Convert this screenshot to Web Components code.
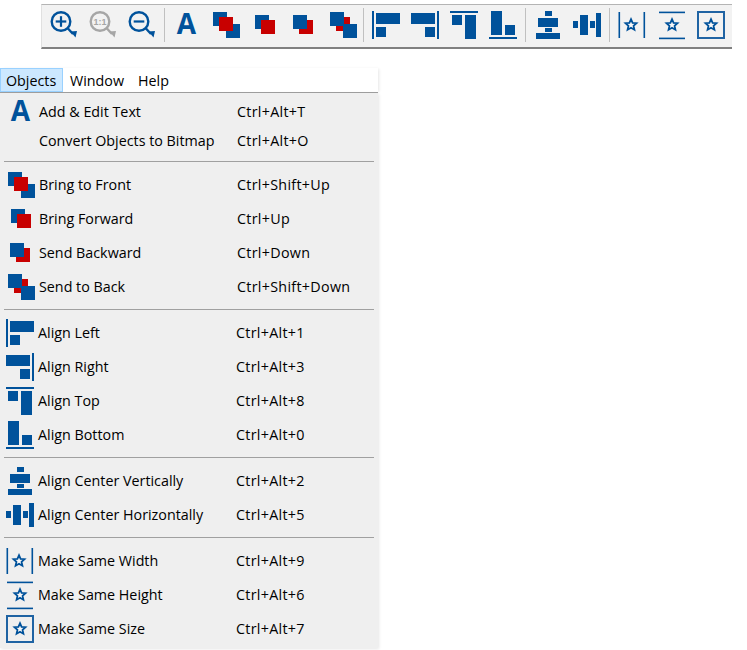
<!DOCTYPE html>
<html lang="en">
<head>
<meta charset="utf-8">
<title>Objects menu</title>
<style>
  html, body { margin: 0; padding: 0; background: #fff; }
  body { width: 747px; height: 650px; overflow: hidden; font-family: "Open Sans", "Noto Sans", sans-serif; }
</style>
</head>
<body>
<app-screen>
  <tool-bar>
    <ui-icon name="zoomIn" style="margin-left:8px"></ui-icon>
    <ui-icon name="zoomReset" style="margin-left:11px"></ui-icon>
    <ui-icon name="zoomOut" style="margin-left:11px"></ui-icon>
    <tool-sep></tool-sep>
    <ui-icon name="text" style="margin-left:1px"></ui-icon>
    <ui-icon name="front" style="margin-left:11px"></ui-icon>
    <ui-icon name="forward" style="margin-left:11px"></ui-icon>
    <ui-icon name="backward" style="margin-left:11px"></ui-icon>
    <ui-icon name="back" style="margin-left:11px"></ui-icon>
    <tool-sep style="margin-left:5px"></tool-sep>
    <ui-icon name="alignLeft"></ui-icon>
    <ui-icon name="alignRight" style="margin-left:11px"></ui-icon>
    <ui-icon name="alignTop" style="margin-left:11px"></ui-icon>
    <ui-icon name="alignBottom" style="margin-left:11px"></ui-icon>
    <tool-sep></tool-sep>
    <ui-icon name="centerV"></ui-icon>
    <ui-icon name="centerH" style="margin-left:11px"></ui-icon>
    <tool-sep></tool-sep>
    <ui-icon name="sameW"></ui-icon>
    <ui-icon name="sameH" style="margin-left:12px"></ui-icon>
    <ui-icon name="sameS" style="margin-left:11px"></ui-icon>
  </tool-bar>

  <menu-bar>
    <menu-title active>Objects</menu-title>
    <menu-title>Window</menu-title>
    <menu-title>Help</menu-title>
  </menu-bar>

  <menu-panel>
    <menu-section first>
      <menu-item icon="text" shortcut="Ctrl+Alt+T">Add &amp; Edit Text</menu-item>
      <menu-item short shortcut="Ctrl+Alt+O">Convert Objects to Bitmap</menu-item>
    </menu-section>
    <menu-section>
      <menu-item icon="front" shortcut="Ctrl+Shift+Up">Bring to Front</menu-item>
      <menu-item icon="forward" shortcut="Ctrl+Up">Bring Forward</menu-item>
      <menu-item icon="backward" shortcut="Ctrl+Down">Send Backward</menu-item>
      <menu-item icon="back" shortcut="Ctrl+Shift+Down">Send to Back</menu-item>
    </menu-section>
    <menu-section tight>
      <menu-item icon="alignLeft" shortcut="Ctrl+Alt+1">Align Left</menu-item>
      <menu-item icon="alignRight" shortcut="Ctrl+Alt+3">Align Right</menu-item>
      <menu-item icon="alignTop" shortcut="Ctrl+Alt+8">Align Top</menu-item>
      <menu-item icon="alignBottom" shortcut="Ctrl+Alt+0">Align Bottom</menu-item>
    </menu-section>
    <menu-section tight>
      <menu-item icon="centerV" shortcut="Ctrl+Alt+2">Align Center Vertically</menu-item>
      <menu-item icon="centerH" shortcut="Ctrl+Alt+5">Align Center Horizontally</menu-item>
    </menu-section>
    <menu-section tight last>
      <menu-item icon="sameW" shortcut="Ctrl+Alt+9">Make Same Width</menu-item>
      <menu-item icon="sameH" shortcut="Ctrl+Alt+6">Make Same Height</menu-item>
      <menu-item icon="sameS" shortcut="Ctrl+Alt+7">Make Same Size</menu-item>
    </menu-section>
  </menu-panel>
</app-screen>

<script>
const BLUE = '#00529b'
const RED = '#c80000'

const box = (x, y, w, h, fill = BLUE) => `<rect x="${x}" y="${y}" width="${w}" height="${h}" fill="${fill}"/>`

const star = (cx, cy) => {
  const points = []
  for (let i = 0; i < 10; i++) {
    const r = i % 2 ? 2.7 : 5.8
    const a = -Math.PI / 2 + i * Math.PI / 5
    points.push((cx + r * Math.cos(a)).toFixed(2) + ',' + (cy + r * Math.sin(a)).toFixed(2))
  }
  return `<polygon points="${points.join(' ')}" fill="#fff" fill-opacity=".55" stroke="${BLUE}" stroke-width="1.8" stroke-linejoin="miter"/>`
}

const lens = (color, inner) => `
  <circle cx="11" cy="10.5" r="9.3" fill="none" stroke="${color}" stroke-width="2.4"/>
  <path d="M17.5 17 L23 23" stroke="${color}" stroke-width="2.4"/>
  <polygon points="20.5,20.5 27,20 25.5,26.5" fill="${color}"/>
  ${inner}`

const ICONS = {
  zoomIn: lens(BLUE, box(5.7, 9.4, 10.6, 2.2) + box(9.9, 5.2, 2.2, 10.6)),
  zoomReset: lens('#a6a6a6', '<text x="11" y="13.5" text-anchor="middle" font-family="Liberation Sans" font-weight="700" font-size="9" fill="#a6a6a6">1:1</text>'),
  zoomOut: lens(BLUE, box(5.7, 9.4, 10.6, 2.2)),
  text: '<text x="2.7" y="22.5" font-family="Open Sans" font-weight="700" font-size="28" fill="' + BLUE + '">A</text>',
  front: box(0, 1, 14, 14) + box(13, 13, 14, 14) + box(6, 6, 14, 14, RED),
  forward: box(3, 4, 14, 14) + box(9, 9, 14, 14, RED),
  backward: box(8, 9, 14, 14, RED) + box(2, 4, 14, 14),
  back: box(6, 6, 14, 14, RED) + box(0, 1, 14, 14) + box(13, 13, 14, 14),
  alignLeft: box(0, 0, 2, 28) + box(4, 2, 24, 11) + box(4, 16, 10, 10),
  alignRight: box(26, 0, 2, 28) + box(0, 2, 24, 11) + box(14, 16, 10, 10),
  alignTop: box(0, 0, 28, 2) + box(2, 4, 10, 10) + box(15, 4, 11, 24),
  alignBottom: box(0, 26, 28, 2) + box(2, 0, 11, 24) + box(16, 14, 10, 10),
  centerV: box(11, 0, 7, 5) + box(4, 7, 20, 9) + box(11, 17, 7, 4) + box(2, 22, 24, 6),
  centerH: box(0, 10, 5, 7) + box(7, 4, 8, 20) + box(17, 10, 5, 7) + box(23, 2, 5, 24),
  sameW: box(0.5, 1, 1.6, 26) + box(25.5, 1, 1.6, 26) + star(13, 14),
  sameH: box(1, 0.6, 26, 1.6) + box(1, 26.6, 26, 1.6) + star(14, 14),
  sameS: `<rect x="1" y="1" width="26" height="26" fill="none" stroke="#1f63a3" stroke-width="2"/>` + star(14, 14)
}

class UiIcon extends HTMLElement {
  constructor () {
    super()
    this.attachShadow({ mode: 'open' })
  }

  connectedCallback () {
    this.shadowRoot.innerHTML = `
      <style>
        :host { display: block; width: 28px; height: 28px; flex: none; }
        svg { display: block; overflow: visible; }
      </style>
      <svg width="28" height="28" viewBox="0 0 28 28" aria-hidden="true">${ICONS[this.getAttribute('name')] || ''}</svg>
    `
  }
}

class AppScreen extends HTMLElement {
  constructor () {
    super()
    this.attachShadow({ mode: 'open' }).innerHTML = `
      <style>
        :host { display: block; padding-top: 4px; }
      </style>
      <slot></slot>
    `
  }
}

class ToolBar extends HTMLElement {
  constructor () {
    super()
    this.attachShadow({ mode: 'open' }).innerHTML = `
      <style>
        :host {
          display: flex;
          align-items: center;
          box-sizing: border-box;
          width: 691px;
          height: 45px;
          margin: 0 0 19px 41px;
          padding-bottom: 2px;
          background: #f2f2f2;
          border-top: 1px solid #b4b4b4;
          border-bottom: 2px solid #808080;
          border-left: 1px solid #e0e0e0;
        }
      </style>
      <slot></slot>
    `
  }
}

class ToolSep extends HTMLElement {
  constructor () {
    super()
    this.attachShadow({ mode: 'open' }).innerHTML = `
      <style>
        :host {
          display: block;
          flex: none;
          width: 1px;
          height: 34px;
          margin: 0 8px;
          background: #c0c0c0;
        }
      </style>
    `
  }
}

class MenuBar extends HTMLElement {
  constructor () {
    super()
    this.attachShadow({ mode: 'open' }).innerHTML = `
      <style>
        :host {
          display: flex;
          box-sizing: border-box;
          width: 378px;
          height: 25px;
          border-bottom: 1px solid #a0a0a0;
          box-shadow: 2px 0 3px -1px rgba(0, 0, 0, .1);
          font-size: 14.3px;
          color: #000;
        }
      </style>
      <slot></slot>
    `
  }
}

class MenuTitle extends HTMLElement {
  constructor () {
    super()
    this.attachShadow({ mode: 'open' }).innerHTML = `
      <style>
        :host {
          display: flex;
          align-items: center;
          box-sizing: border-box;
          height: 24px;
          padding: 1px 6px 0;
          border: 1px solid transparent;
          white-space: nowrap;
        }
        :host([active]) {
          padding-left: 5px;
          width: 63px;
          background: #cce8ff;
          border-color: #99d1ff;
        }
      </style>
      <slot></slot>
    `
  }
}

class MenuPanel extends HTMLElement {
  constructor () {
    super()
    this.attachShadow({ mode: 'open' }).innerHTML = `
      <style>
        :host {
          display: block;
          width: 378px;
          height: 555px;
          background: #efefef;
          box-shadow: 1px 1px 3px rgba(0, 0, 0, .1);
          font-size: 14.3px;
          color: #000;
        }
      </style>
      <slot></slot>
    `
  }
}

class MenuSection extends HTMLElement {
  constructor () {
    super()
    this.attachShadow({ mode: 'open' }).innerHTML = `
      <style>
        :host {
          display: block;
          padding-top: 6px;
          --row-indent: 8px;
          --icon-gap: 3px;
          --label-col: 201px;
        }
        :host([first]) { padding-top: 2px; }
        :host([tight]) { --row-indent: 6px; --icon-gap: 4px; --label-col: 202px; }
        .foot { height: 5px; }
        :host([first]) .foot { height: 8px; }
        .rule { height: 1px; margin: 0 4px; background: #a0a0a0; }
        :host([last]) .foot, :host([last]) .rule { display: none; }
      </style>
      <slot></slot>
      <div class="foot"></div>
      <div class="rule"></div>
    `
  }
}

class MenuItem extends HTMLElement {
  constructor () {
    super()
    this.attachShadow({ mode: 'open' })
  }

  connectedCallback () {
    const icon = this.getAttribute('icon')
    this.shadowRoot.innerHTML = `
      <style>
        :host {
          display: grid;
          grid-template-columns: 28px var(--label-col) auto;
          align-items: center;
          height: 34px;
          padding-left: var(--row-indent);
          white-space: nowrap;
        }
        :host([short]) { height: 24px; }
        .label { padding: 0 0 2px var(--icon-gap); }
        .keys { padding-bottom: 2px; letter-spacing: .3px; }
      </style>
      <div>${icon ? `<ui-icon name="${icon}"></ui-icon>` : ''}</div>
      <div class="label"><slot></slot></div>
      <div class="keys">${this.getAttribute('shortcut') || ''}</div>
    `
  }
}

customElements.define('ui-icon', UiIcon)
customElements.define('app-screen', AppScreen)
customElements.define('tool-bar', ToolBar)
customElements.define('tool-sep', ToolSep)
customElements.define('menu-bar', MenuBar)
customElements.define('menu-title', MenuTitle)
customElements.define('menu-panel', MenuPanel)
customElements.define('menu-section', MenuSection)
customElements.define('menu-item', MenuItem)
</script>
</body>
</html>
